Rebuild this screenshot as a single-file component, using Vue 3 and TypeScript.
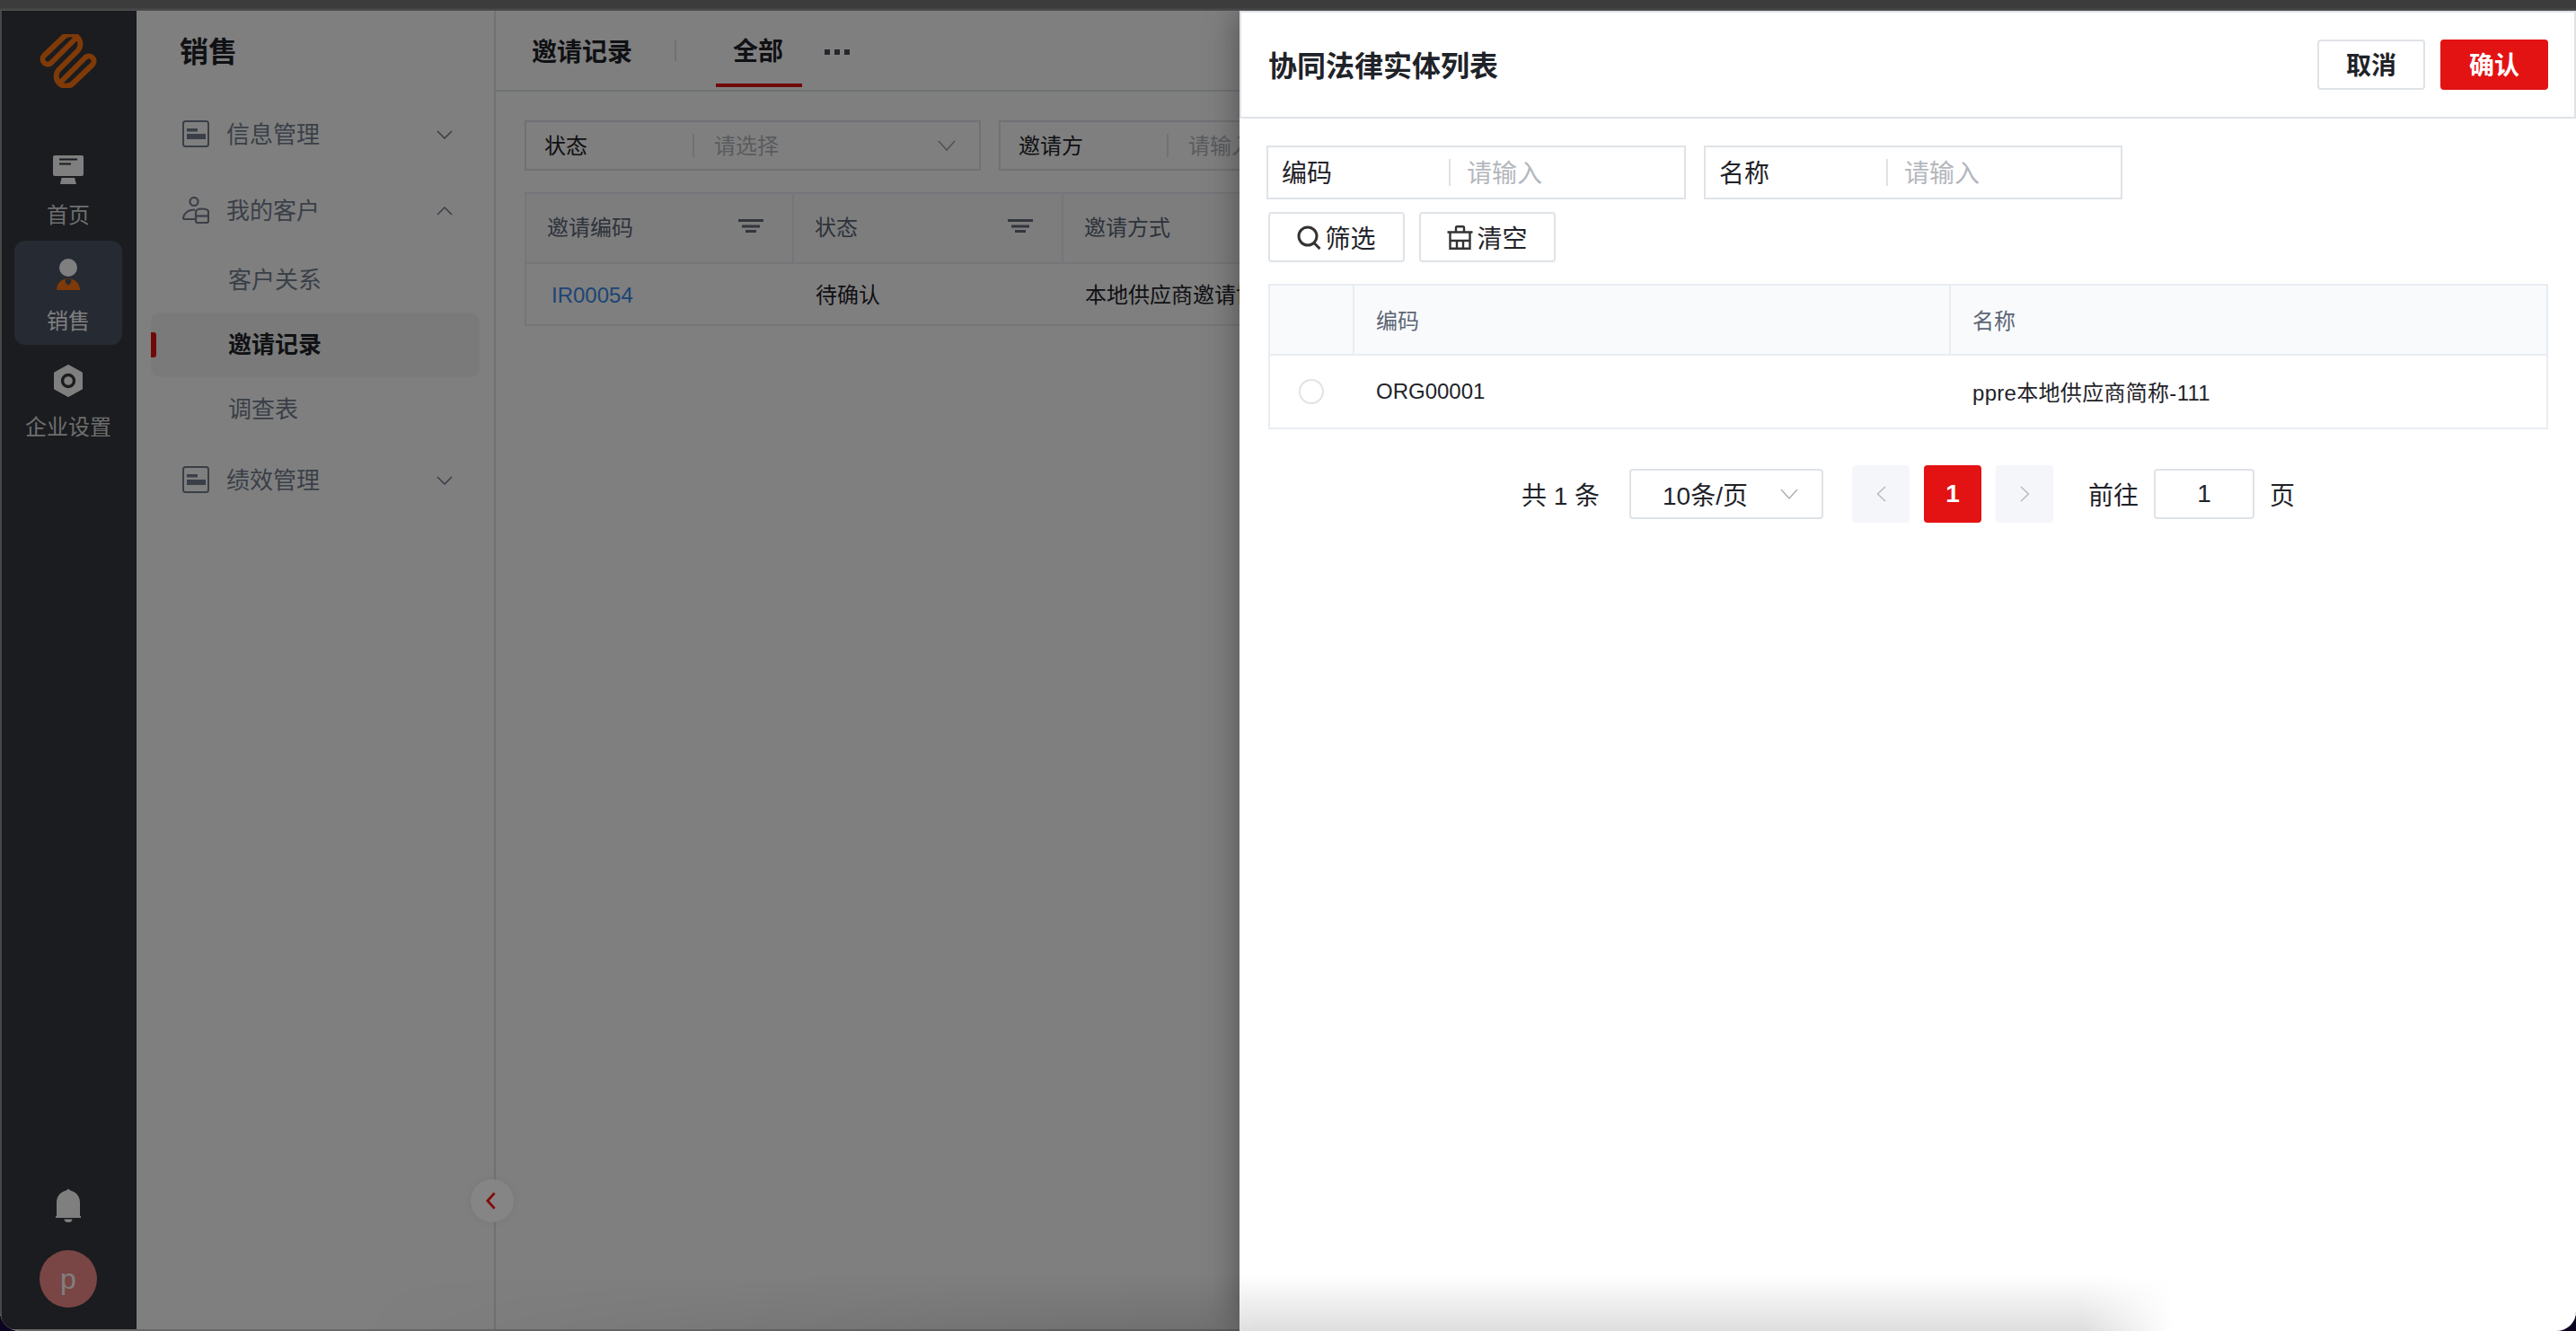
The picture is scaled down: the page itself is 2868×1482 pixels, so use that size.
<script setup lang="ts">
const filters = [
  { label: '状态', placeholder: '请选择', select: true },
  { label: '邀请方', placeholder: '请输入', select: false },
]
const headers = [
  { text: '邀请编码', filter: true },
  { text: '状态', filter: true },
  { text: '邀请方式', filter: false },
]
const subItems = [
  { text: '客户关系', active: false },
  { text: '邀请记录', active: true },
  { text: '调查表', active: false },
]
</script>

<template>
  <div class="window">
    <div class="titlebar"></div>
    <div class="app">
      <nav class="rail">
        <svg class="logo" viewBox="44 38 64 60" fill="none" stroke="#ff7510" stroke-width="6" stroke-linejoin="round">
          <path d="M86 41 L57 70 A5.66 5.66 0 0 1 49 62 L71 41 A11 11 0 0 1 87 56 L65 78 A11 11 0 0 0 81 93 L103 72 A5.66 5.66 0 0 0 95 64 L66 93" />
        </svg>
        <div class="rail-item">
          <svg class="ico-home" viewBox="0 0 34 32">
            <rect width="34" height="23" rx="2" fill="#fff" />
            <path d="M7 4.5H27M7 9.5H20" stroke="#34383f" stroke-width="2" />
            <path d="M9.5 25H24L26 32H8Z" fill="#fff" />
          </svg>
          <span>首页</span>
        </div>
        <div class="rail-item active">
          <svg class="ico-person" viewBox="0 0 28 36">
            <circle cx="14" cy="11" r="10" fill="#fff" />
            <path d="M1 36A13 13 0 0 1 27 36Z" fill="#ff7510" />
            <path d="M10.5 23.5H17.5L17 28L14 31L11 28Z" fill="#4c5464" />
          </svg>
          <span>销售</span>
        </div>
        <div class="rail-item">
          <svg class="ico-hex" viewBox="0 0 32 36">
            <path d="M16 1.5L30.5 9.5V26.5L16 34.5L1.5 26.5V9.5Z" fill="#fff" stroke="#fff" stroke-width="3" stroke-linejoin="round" />
            <circle cx="16" cy="18" r="6.5" fill="#fff" stroke="#34383f" stroke-width="3.4" />
          </svg>
          <span>企业设置</span>
        </div>
        <div class="rail-spacer"></div>
        <svg class="ico-bell" viewBox="0 0 28 37">
          <path d="M14 0a2.4 2.4 0 0 1 2.2 1.6C22.5 3 27 8 27 15V30H28V32H0V30H1V15C1 8 5.5 3 11.8 1.6A2.4 2.4 0 0 1 14 0Z" fill="#fff" />
          <path d="M9.5 33.5H18.5C18.5 36 16.5 37 14 37S9.5 36 9.5 33.5Z" fill="#fff" />
        </svg>
        <div class="avatar">p</div>
      </nav>

      <aside class="side">
        <h2 class="side-title">销售</h2>
        <div class="menu-row first">
          <svg class="ico-menu" viewBox="0 0 30 30">
            <rect x="1" y="1" width="28" height="28" rx="2.5" fill="none" stroke="#747e90" stroke-width="2" />
            <path d="M5 9H17V12.5H5ZM5 15H26V21H5Z" fill="#747e90" />
          </svg>
          <span>信息管理</span>
          <svg class="chev" viewBox="0 0 18 10" fill="none" stroke="#747e90" stroke-width="1.6"><path d="M1 1L9 9L17 1" /></svg>
        </div>
        <div class="menu-row">
          <svg class="ico-menu" viewBox="0 0 30 30" fill="none" stroke="#747e90" stroke-width="2.2">
            <circle cx="13" cy="5.5" r="4.5" />
            <path d="M1 25C1 19 6 14.500 14 14.500M1 25H14" />
            <path d="M15 22V17C15 14.500 17 13.500 22 13.500S29 14.500 29 17V27C29 28.200 28.200 29 27 29H17C15.800 29 15 28.200 15 27Z" />
            <path d="M15 21.500H29" />
          </svg>
          <span>我的客户</span>
          <svg class="chev" viewBox="0 0 18 10" fill="none" stroke="#747e90" stroke-width="1.6"><path d="M1 9L9 1L17 9" /></svg>
        </div>
        <div class="sub-list">
          <div v-for="item in subItems" :key="item.text" class="sub-item" :class="{ on: item.active }">
            <i v-if="item.active" class="sub-mark"></i>
            {{ item.text }}
          </div>
        </div>
        <div class="menu-row">
          <svg class="ico-menu" viewBox="0 0 30 30">
            <rect x="1" y="1" width="28" height="28" rx="2.5" fill="none" stroke="#747e90" stroke-width="2" />
            <path d="M5 9H17V12.5H5ZM5 15H26V21H5Z" fill="#747e90" />
          </svg>
          <span>绩效管理</span>
          <svg class="chev" viewBox="0 0 18 10" fill="none" stroke="#747e90" stroke-width="1.6"><path d="M1 1L9 9L17 1" /></svg>
        </div>
        <button class="collapse" type="button" aria-label="收起">
          <svg viewBox="0 0 12 22" fill="none" stroke="#860808" stroke-width="3"><path d="M10.5 1.5L2 11L10.5 20.5" /></svg>
        </button>
      </aside>

      <main class="main">
        <div class="tabs">
          <span class="tabs-name">邀请记录</span>
          <i class="tabs-sep"></i>
          <span class="tab-on">全部</span>
          <span class="tabs-more"><i></i><i></i><i></i></span>
        </div>
        <div class="main-body">
          <div class="filters">
            <div v-for="f in filters" :key="f.label" class="filter">
              <span class="filter-label">{{ f.label }}</span>
              <i class="filter-sep"></i>
              <span class="filter-ph">{{ f.placeholder }}</span>
              <svg v-if="f.select" class="filter-chev" viewBox="0 0 20 12" fill="none" stroke="#9ea3ab" stroke-width="1.6"><path d="M1 1L10 11L19 1" /></svg>
            </div>
          </div>
          <div class="list">
            <div class="list-row head">
              <div v-for="h in headers" :key="h.text" class="list-cell">
                <span>{{ h.text }}</span>
                <svg v-if="h.filter" class="ico-filter" viewBox="0 0 28 15" fill="#666c78"><path d="M0 0H28V3H0ZM4 6.500H24V9.500H4ZM8 12H20V15H8Z" /></svg>
              </div>
            </div>
            <div class="list-row">
              <div class="list-cell"><a class="link">IR00054</a></div>
              <div class="list-cell">待确认</div>
              <div class="list-cell">本地供应商邀请协同</div>
            </div>
          </div>
        </div>
      </main>
    </div>
    <div class="frame-bottom"></div>

    <div class="mask"></div>
    <div class="dock-shade"></div>

    <section class="drawer">
      <header class="d-head">
        <h3 class="d-title">协同法律实体列表</h3>
        <div class="d-actions">
          <button class="btn" type="button">取消</button>
          <button class="btn primary" type="button">确认</button>
        </div>
      </header>
      <div class="d-body">
        <div class="d-fields">
          <div class="d-field">
            <span class="d-label">编码</span><i class="d-sep"></i><span class="d-ph">请输入</span>
          </div>
          <div class="d-field">
            <span class="d-label">名称</span><i class="d-sep"></i><span class="d-ph">请输入</span>
          </div>
        </div>
        <div class="d-tools">
          <button class="tool" type="button">
            <svg class="ico-search" viewBox="0 0 27 27" fill="none" stroke="#333" stroke-width="3"><circle cx="12" cy="12" r="10" /><path d="M19 19.500L25.500 26" /></svg>
            筛选
          </button>
          <button class="tool" type="button">
            <svg class="ico-clear" viewBox="0 0 29 27" fill="none" stroke="#333" stroke-width="2.4"><path d="M10 7.500V2.500C10 1.700 10.500 1.200 11.300 1.200H17.700C18.500 1.200 19 1.700 19 2.500V7.500M0.500 7.500H28.500M3.500 7.500V25.800H25.500V7.500M3.500 17H25.500M11 17V25.800M18 17V25.800" /></svg>
            清空
          </button>
        </div>
        <div class="d-table">
          <div class="d-row head">
            <div class="d-cell"></div>
            <div class="d-cell">编码</div>
            <div class="d-cell">名称</div>
          </div>
          <div class="d-row">
            <div class="d-cell center"><i class="radio"></i></div>
            <div class="d-cell">ORG00001</div>
            <div class="d-cell mixed">ppre本地供应商简称-111</div>
          </div>
        </div>
        <div class="pager">
          <span>共 1 条</span>
          <div class="size">
            <span>10条/页</span>
            <svg viewBox="0 0 20 12" fill="none" stroke="#a9adb4" stroke-width="1.4"><path d="M1 1L10 11L19 1" /></svg>
          </div>
          <span class="page-btn prev"><svg viewBox="0 0 11 18" fill="none" stroke="#b4b7bd" stroke-width="1.4"><path d="M10 1L1.500 9L10 17" /></svg></span>
          <span class="page-btn on">1</span>
          <span class="page-btn next"><svg viewBox="0 0 11 18" fill="none" stroke="#b4b7bd" stroke-width="1.4"><path d="M1 1L9.500 9L1 17" /></svg></span>
          <span class="goto">前往</span>
          <span class="page-input">1</span>
          <span>页</span>
        </div>
      </div>
    </section>
  </div>
</template>

<style>
html, body { margin: 0; background: #0c0420; }
</style>

<style scoped>
* { box-sizing: border-box; }
.window {
  position: relative;
  width: 2868px;
  height: 1482px;
  display: flex;
  flex-direction: column;
  overflow: hidden;
  border-radius: 0 0 22px 22px;
  font-family: "Liberation Sans", "Noto Sans CJK SC", sans-serif;
  color: #1f2329;
  background: #fff;
}
.titlebar {
  height: 12px;
  flex: none;
  background: linear-gradient(#3c3c3c 70%, #505050);
  position: relative;
  z-index: 5;
}
.app { flex: 1; min-height: 0; display: flex; }
.frame-bottom { height: 2px; flex: none; background: #cfcfcf; }

/* rail */
.rail {
  width: 152px;
  flex: none;
  border-left: 2px solid #8e8e8e;
  background: #34383f;
  display: flex;
  flex-direction: column;
  align-items: center;
  padding: 26px 0 24px;
}
.logo { width: 64px; height: 60px; margin-left: -2px; flex: none; }
.rail-item {
  width: 120px;
  height: 116px;
  margin-left: -2px;
  flex: none;
  display: flex;
  flex-direction: column;
  align-items: center;
  justify-content: flex-start;
  color: #dcdcdc;
  font-size: 24px;
  line-height: 32px;
  border-radius: 12px;
}
.rail-item:nth-of-type(1) { margin-top: 75px; height: 95px; }
.rail-item.active { height: 116px; margin-top: 0; background: #4c5464; color: #fff; padding-top: 19px; }
.rail-item:nth-of-type(3) { margin-top: 22px; }
.rail-item span { display: block; }
.ico-home { width: 34px; height: 32px; margin-bottom: 19px; }
.ico-person { width: 28px; height: 36px; margin-bottom: 19px; }
.ico-hex { width: 32px; height: 36px; margin-bottom: 18px; }
.rail-spacer { flex: 1; }
.ico-bell { width: 28px; height: 37px; margin-left: -2px; flex: none; }
.avatar {
  width: 64px;
  height: 64px;
  margin: 31px 0 0 -2px;
  flex: none;
  border-radius: 50%;
  background: #f48a8a;
  color: #fff;
  font-size: 32px;
  display: flex;
  align-items: center;
  justify-content: center;
}

/* secondary sidebar */
.side {
  position: relative;
  width: 400px;
  flex: none;
  border-right: 2px solid #dfe3e8;
  padding: 0 16px;
  background: #fff;
}
.side-title {
  margin: 0 0 0 32px;
  height: 90px;
  font-size: 32px;
  font-weight: 700;
  line-height: 92px;
}
.menu-row {
  height: 72px;
  display: flex;
  align-items: center;
  padding: 0 30px 0 35px;
  margin-top: 13px;
  font-size: 26px;
  color: #747e90;
}
.menu-row.first { margin-top: 11px; }
.menu-row span { padding-bottom: 3px; }
.ico-menu { width: 30px; height: 30px; margin-right: 19px; flex: none; }
.chev { width: 18px; height: 10px; margin: 2px 0 0 auto; }
.sub-list { margin: 6px 0; }
.sub-list + .menu-row { margin-top: 0; }
.sub-item {
  position: relative;
  height: 72px;
  line-height: 72px;
  padding-left: 86px;
  font-size: 26px;
  color: #747e90;
  border-radius: 10px;
}
.sub-item.on { background: #f4f4f5; color: #1f2329; font-weight: 700; }
.sub-mark {
  position: absolute;
  left: 0;
  top: 22px;
  width: 6px;
  height: 28px;
  background: #e31313;
  border-radius: 0 3px 3px 0;
}
.collapse {
  position: absolute;
  z-index: 2;
  left: 372px;
  top: 1301px;
  width: 48px;
  height: 48px;
  padding: 0;
  border: 0;
  border-radius: 50%;
  background: #858585;
  box-shadow: 0 0 10px rgba(0, 0, 0, .06);
  display: flex;
  align-items: center;
  justify-content: center;
}
.collapse svg { width: 11px; height: 20px; margin-left: -4px; }

/* main */
.main { flex: 1; min-width: 0; overflow: hidden; background: #fff; }
.tabs {
  height: 90px;
  display: flex;
  align-items: center;
  padding-left: 40px;
  border-bottom: 2px solid #dfe3e8;
  font-size: 28px;
  font-weight: 700;
}
.tabs-name { width: 112px; }
.tabs-sep { width: 2px; height: 24px; margin: 0 44px 0 47px; background: #dfe3e8; }
.tab-on { position: relative; width: 96px; height: 88px; text-align: center; line-height: 91px; text-indent: -2px; }
.tab-on::after {
  content: "";
  position: absolute;
  left: 0;
  right: 0;
  bottom: 3px;
  height: 4px;
  background: #e31313;
}
.tabs-more { display: flex; gap: 5px; margin: 4px 0 0 25px; }
.tabs-more i { width: 6px; height: 6px; background: #4a4f58; }
.main-body { padding: 32px 0 0 32px; }
.filters { display: flex; gap: 20px; }
.filter {
  width: 508px;
  height: 56px;
  flex: none;
  display: flex;
  align-items: center;
  border: 2px solid #dfe3e8;
  font-size: 24px;
}
.filter-label { width: 185px; padding: 0 0 3px 20px; flex: none; }
.filter-sep { width: 2px; height: 26px; background: #dfe3e8; flex: none; }
.filter-ph { margin-left: 22px; padding-bottom: 3px; color: #b4b7bd; }
.filter-chev { width: 20px; height: 12px; margin-left: auto; margin-right: 26px; }
.list { margin-top: 24px; width: 1100px; border: 2px solid #e9edf2; font-size: 24px; }
.list-row { display: grid; grid-template-columns: 298px 300px 1fr; height: 67px; align-items: stretch; }
.list-row.head { height: 78px; border-bottom: 2px solid #e9edf2; color: #5c6675; background: #fafbfc; }
.list-cell { display: flex; align-items: center; padding: 0 0 2px 24px; }
.head .list-cell { justify-content: space-between; padding: 0 32px 6px 23px; border-right: 2px solid #e9edf2; }
.ico-filter { width: 28px; height: 15px; }
.link { color: #3a8ae8; padding: 5px 0 0 4px; }

/* overlay */
.mask {
  position: absolute;
  inset: 12px 0 0;
  background: rgba(0, 0, 0, .5);
}
.dock-shade {
  position: absolute;
  left: 400px;
  width: 2020px;
  bottom: 0;
  height: 62px;
  z-index: 3;
  pointer-events: none;
  background: linear-gradient(rgba(0, 0, 0, 0), rgba(0, 0, 0, .13));
  -webkit-mask-image: linear-gradient(to right, transparent, #000 50%, #000 95%, transparent);
  mask-image: linear-gradient(to right, transparent, #000 50%, #000 95%, transparent);
}
.drawer {
  position: absolute;
  top: 12px;
  right: 0;
  bottom: 0;
  width: 1488px;
  background: #fff;
  box-shadow: 0 0 36px rgba(0, 0, 0, .38);
}
.d-head {
  height: 120px;
  display: flex;
  align-items: center;
  justify-content: space-between;
  padding: 0 29px 0 30px;
  border: 2px solid #dfe3e8;
}
.d-title { margin: 0; padding-bottom: 3px; font-size: 32px; font-weight: 600; }
.d-actions { display: flex; gap: 17px; }
.btn {
  width: 120px;
  height: 56px;
  padding: 0 0 3px;
  border: 2px solid #dfe3e8;
  border-radius: 4px;
  background: #fff;
  color: #1f2329;
  font: 700 28px "Liberation Sans", "Noto Sans CJK SC", sans-serif;
}
.btn.primary { background: #e31313; border-color: #e31313; color: #fff; }
.d-body { padding: 30px 31px 0 30px; }
.d-fields { display: flex; gap: 20px; }
.d-field {
  width: 467px;
  height: 60px;
  display: flex;
  align-items: center;
  border: 2px solid #dfe3e8;
  font-size: 28px;
}
.d-field + .d-field { width: 466px; }
.d-label { width: 201px; padding: 0 0 3px 15px; flex: none; }
.d-sep { width: 2px; height: 30px; background: #dfe3e8; flex: none; }
.d-ph { margin-left: 18px; padding-bottom: 3px; color: #b4b7bd; }
.d-tools { display: flex; gap: 16px; margin: 14px 0 0 2px; }
.tool {
  width: 152px;
  height: 56px;
  padding: 0;
  display: flex;
  align-items: center;
  justify-content: center;
  gap: 4px;
  border: 2px solid #dfe3e8;
  border-radius: 4px;
  background: #fff;
  color: #1f2329;
  font: 400 28px "Liberation Sans", "Noto Sans CJK SC", sans-serif;
}
.ico-search { width: 27px; height: 27px; }
.ico-clear { width: 29px; height: 27px; }
.d-table { margin: 24px 0 0 2px; border: 2px solid #e9edf2; font-size: 24px; }
.d-row { display: grid; grid-template-columns: 94px 664px 1fr; height: 80px; }
.d-row.head { height: 78px; background: #f9fafc; color: #5c6675; border-bottom: 2px solid #e9edf2; }
.d-cell { display: flex; align-items: center; padding-left: 24px; }
.head .d-cell { padding-bottom: 2px; border-right: 2px solid #e9edf2; }
.head .d-cell:last-child { border-right: 0; }
.d-cell.center { padding-left: 32px; }
.d-cell.mixed { padding-bottom: 2px; letter-spacing: .3px; }
.radio { width: 28px; height: 28px; border: 2px solid #dfe3e8; border-radius: 50%; }
.pager {
  display: flex;
  align-items: center;
  justify-content: center;
  margin-top: 40px;
  padding-left: 2px;
  font-size: 28px;
}
.size {
  width: 216px;
  height: 56px;
  margin: 0 32px 0 33px;
  display: flex;
  align-items: center;
  justify-content: space-between;
  padding: 0 26px 0 35px;
  border: 2px solid #dfe3e8;
  border-radius: 4px;
}
.size svg { width: 20px; height: 12px; }
.page-btn {
  width: 64px;
  height: 64px;
  display: flex;
  align-items: center;
  justify-content: center;
  border-radius: 4px;
  background: #f5f6fa;
}
.page-btn svg { width: 11px; height: 18px; }
.page-btn.on { margin: 0 16px; background: #e31313; color: #fff; font-weight: 700; }
.goto { margin-left: 39px; }
.page-input {
  width: 112px;
  height: 56px;
  margin: 0 17px;
  display: flex;
  align-items: center;
  justify-content: center;
  border: 2px solid #dfe3e8;
  border-radius: 4px;
}
</style>
